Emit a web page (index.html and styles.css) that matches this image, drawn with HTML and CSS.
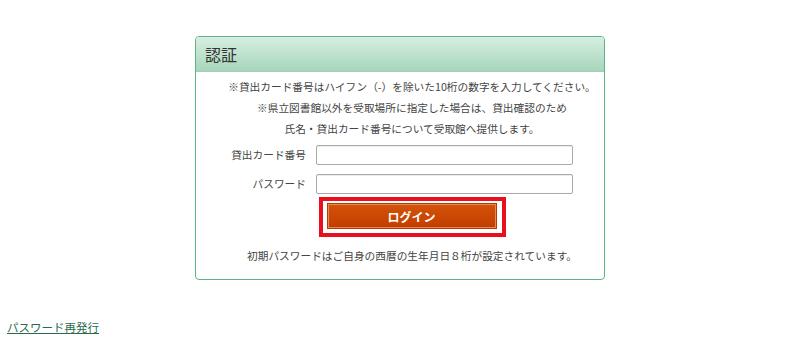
FILE: index.html
```html
<!DOCTYPE html>
<html lang="ja">
<head>
    <meta charset="UTF-8">
    <meta name="viewport" content="width=device-width, initial-scale=1.0">
    <title>認証</title>
    <link rel="stylesheet" href="styles.css">
</head>
<body>
    <div class="page">
        <div class="panel">
            <div class="panel-head">認証</div>
            <div class="panel-body">
                <div class="notes">
                    <p>※貸出カード番号はハイフン（-）を除いた10桁の数字を入力してください。</p>
                    <p>※県立図書館以外を受取場所に指定した場合は、貸出確認のため</p>
                    <p>氏名・貸出カード番号について受取館へ提供します。</p>
                </div>

                <form class="login-form" onsubmit="return false;">
                    <label for="card">貸出カード番号</label>
                    <input type="text" id="card" name="card">
                    <label for="pass">パスワード</label>
                    <input type="password" id="pass" name="pass">
                </form>

                <div class="actions">
                    <div class="focus-ring">
                        <button type="button" class="btn-login">ログイン</button>
                    </div>
                </div>

                <p class="hint">初期パスワードはご自身の西暦の生年月日８桁が設定されています。</p>
            </div>
        </div>

        <div class="footer">
            <a href="#">パスワード再発行</a>
        </div>
    </div>
</body>
</html>
```

FILE: styles.css
```css
body {
    margin: 0;
    font-family: "Noto Sans CJK JP", "Noto Sans", sans-serif;
    font-size: 10.7px;
    color: #444;
    background: #fff;
}
.page {
    padding-top: 36px;
}
.panel {
    width: 410px;
    margin: 0 auto;
    border: 1px solid #5cb585;
    border-radius: 4px;
    box-sizing: border-box;
}
.panel-head {
    height: 34px;
    line-height: 34px;
    padding: 0 9px;
    font-size: 16px;
    color: #333;
    background: linear-gradient(#d8eee2, #a6d6ba);
    border-bottom: 1px solid #9fd0b4;
    border-radius: 3px 3px 0 0;
}
.panel-body {
    padding: 4px 0 13px;
}
.notes {
    padding-left: 24px;
    text-align: center;
}
.notes p {
    margin: 0;
    line-height: 21px;
}
.login-form {
    display: grid;
    grid-template-columns: 110px 257px;
    column-gap: 10px;
    row-gap: 9px;
    margin: 6px 0 0;
    align-items: center;
}
.login-form label {
    text-align: right;
    line-height: 20px;
}
.login-form input {
    height: 20px;
    box-sizing: border-box;
    border: 1px solid #aaa;
    border-radius: 2px;
    box-shadow: inset 0 1px 1px rgba(0,0,0,0.08);
    padding: 0 4px;
    font-size: 11px;
}
.actions {
    padding-left: 24px;
    margin-top: 3px;
    display: flex;
    justify-content: center;
}
.focus-ring {
    border: 4px solid #e8101e;
    padding: 2px 5px 4px 4px;
}
.btn-login {
    display: block;
    width: 170px;
    height: 26px;
    border: 1px solid #b33a00;
    box-shadow: inset 0 0 0 1px #e3895a;
    background: linear-gradient(#d45408, #c13d00);
    color: #fff;
    font-family: inherit;
    font-size: 12px;
    font-weight: bold;
    cursor: pointer;
}
.hint {
    margin: 8px 0 0;
    padding-left: 24px;
    text-align: center;
    line-height: 21px;
}
.footer {
    margin-top: 39px;
    padding-left: 7px;
    font-size: 11.5px;
}
.footer a {
    color: #2a6b4c;
}
```
